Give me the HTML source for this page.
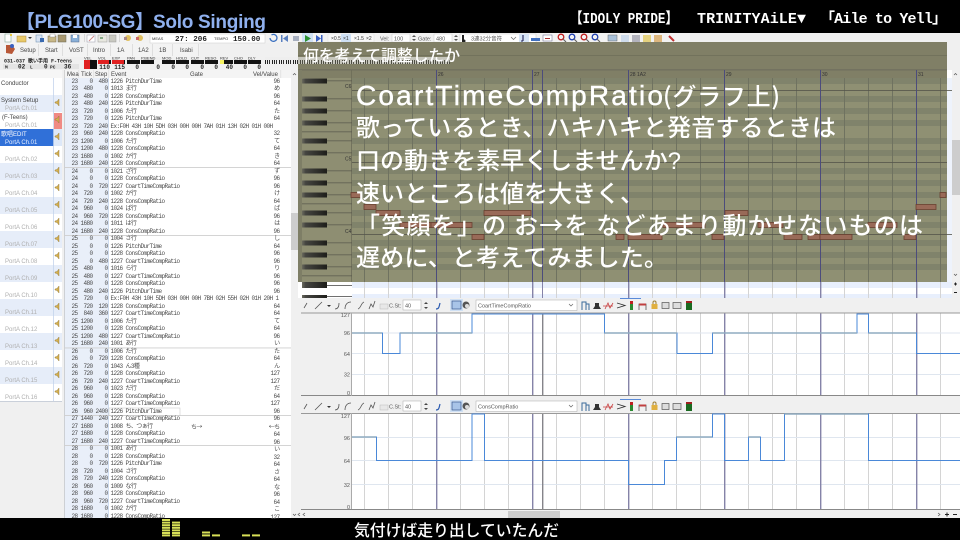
<!DOCTYPE html>
<html><head><meta charset="utf-8"><style>
html,body{margin:0;padding:0;background:#000}
body{position:relative;width:960px;height:540px;overflow:hidden}
svg{position:absolute;left:0;top:0}
pre{position:absolute;margin:0;font:6px/7.5px "Liberation Mono","Noto Sans CJK JP",monospace;letter-spacing:-.6px;color:#4a4a4a}
.s text{font-family:"Liberation Sans","Noto Sans CJK JP",sans-serif;font-size:6px;fill:#444}
.s text.g{fill:#b0b0b0}
.s text.m{font-family:"Liberation Mono",monospace;font-size:6px;font-weight:bold;fill:#222}
.s text.big{font-family:"Liberation Mono",monospace;font-size:7.6px;font-weight:bold;fill:#222}
.s text.y{font-size:5.5px;fill:#555}
.s text.r{font-size:5px;fill:#333}
.s text.main{font-family:"Liberation Sans","Noto Sans CJK JP",sans-serif;font-size:24px;font-weight:500;fill:#fff}
.s text.lyr{font-family:"Liberation Sans","Noto Sans CJK JP",sans-serif;font-size:15.8px;font-weight:500;fill:#fff}
.s text.tt{font-family:"Liberation Sans","Noto Sans CJK JP",sans-serif;font-size:19px;font-weight:bold;fill:#8fb0ee}
.s text.tr{font-family:"Liberation Mono","Noto Sans CJK JP",monospace;font-size:15px;font-weight:bold;fill:#fff}
</style></head><body>
<svg class="s" width="960" height="540" viewBox="0 0 960 540">
<defs>
<pattern id="b" x="364" y="0" width="24" height="10" patternUnits="userSpaceOnUse"><rect width="1" height="10" fill="#d4d4d4"/></pattern>
<pattern id="bo" x="364" y="0" width="24" height="10" patternUnits="userSpaceOnUse"><rect width="1" height="10" fill="#6f7260"/></pattern>
<pattern id="m" x="436" y="0" width="96" height="10" patternUnits="userSpaceOnUse"><rect width="1.4" height="10" fill="#8583a8"/></pattern>
<pattern id="mo" x="436" y="0" width="96" height="10" patternUnits="userSpaceOnUse"><rect width="1" height="10" fill="#4c4c7c"/></pattern>
<pattern id="kb" x="265" y="0" width="7" height="10" patternUnits="userSpaceOnUse"><rect width="7" height="10" fill="#eee"/><rect width="1" height="6" fill="#222"/><rect x="2" width="1" height="6" fill="#222"/><rect x="4" width="1" height="6" fill="#333"/></pattern>
<linearGradient id="k" x1="0" x2="1"><stop offset="0" stop-color="#6a6a5e"/><stop offset=".15" stop-color="#444440"/><stop offset="1" stop-color="#1e1e1a"/></linearGradient>
</defs>
<!-- app base -->
<rect y="33" width="960" height="485" fill="#f0f0f0"/>
<rect y="33" width="690" height="10" fill="#f2f2f2"/>
<rect y="43" width="200" height="14" fill="#f3f3f3"/>
<!-- toolbar 1 icons -->
<g stroke="none">
<rect x="5" y="34" width="6" height="8" fill="#fff" stroke="#8a9" stroke-width=".6"/><rect x="10" y="34" width="2" height="2" fill="#e8c840"/>
<rect x="17" y="36" width="9" height="6" fill="#e8c868" stroke="#a8883a" stroke-width=".5"/>
<path d="M28 37h4l-2 2z" fill="#333"/>
<rect x="36" y="35" width="6" height="7" fill="#d8e4f4" stroke="#6688aa" stroke-width=".5"/><rect x="40" y="38" width="4" height="4" fill="#3a6ab0"/>
<rect x="48" y="36" width="8" height="6" fill="#c8b888" stroke="#7a6a4a" stroke-width=".5"/><rect x="50" y="34" width="5" height="3" fill="#fff" stroke="#888" stroke-width=".4"/>
<rect x="58" y="35" width="8" height="7" fill="#a89870" stroke="#665" stroke-width=".5"/>
<rect x="71" y="35" width="8" height="7" fill="#8ab0d8" stroke="#568" stroke-width=".5"/><rect x="73" y="35" width="4" height="3" fill="#fff"/>
<rect x="84" y="34" width=".7" height="8" fill="#ccc"/>
<rect x="87" y="35" width="8" height="7" fill="#fff" stroke="#99a" stroke-width=".5"/><path d="M89 41l5-5" stroke="#c88" stroke-width="1"/>
<rect x="98" y="35" width="9" height="7" fill="#e8e8e0" stroke="#999" stroke-width=".5"/><rect x="100" y="37" width="3" height="2" fill="#8a8"/>
<rect x="109" y="35" width="7" height="7" fill="#c8c8c0" stroke="#999" stroke-width=".5"/>
<rect x="119" y="34" width=".7" height="8" fill="#ccc"/>
<circle cx="128" cy="38" r="3" fill="#e0c060"/><rect x="124" y="37" width="3" height="3" fill="#a88"/>
<circle cx="140" cy="38" r="3" fill="#e0c060"/><rect x="136" y="37" width="3" height="3" fill="#c66"/>
<rect x="150" y="34" width="115" height="9" fill="#fff" stroke="#ccc" stroke-width=".5"/>
<path d="M270 38a3.500 3.500 0 1 0 1.500-3" fill="none" stroke="#3a70c0" stroke-width="1.300"/>
<rect x="281" y="35" width="1.500" height="7" fill="#5a80c0"/><path d="M288 35v7l-5-3.500z" fill="#5a80c0"/>
<rect x="293" y="36" width="6" height="5" fill="#a8b0c0"/>
<rect x="302" y="33" width="11" height="10" fill="#cfe0f4"/><path d="M305 35v7l6-3.500z" fill="#2a9030"/>
<path d="M316 35v7l5-3.500z" fill="#3a60c0"/><rect x="321" y="35" width="1.500" height="7" fill="#3a60c0"/>
<rect x="328" y="34" width="46" height="8" fill="#f8f8f8" stroke="#ddd" stroke-width=".5"/><rect x="341" y="34" width="10" height="8" fill="#cfe0f4"/>
<rect x="392" y="34" width="18" height="8" fill="#fff" stroke="#ccc" stroke-width=".5"/>
<rect x="434" y="34" width="18" height="8" fill="#fff" stroke="#ccc" stroke-width=".5"/>
<path d="M412 37l2-2 2 2zM412 39l2 2 2-2zM454 37l2-2 2 2zM454 39l2 2 2-2z" fill="#555"/>
<rect x="460" y="34" width="76" height="9" fill="#fff" stroke="#ccc" stroke-width=".5"/>
<rect x="462" y="35" width="2" height="7" fill="#222"/><circle cx="464" cy="41" r="1.500" fill="#222"/>
<path d="M511 37l2.500 2.500 2.500-2.500" fill="none" stroke="#666" stroke-width=".7"/>
<rect x="519" y="34" width="10" height="9" fill="#d6e4f6"/><path d="M523 35v6M523 41h-2" stroke="#225" stroke-width="1.100"/>
<rect x="531" y="38" width="9" height="3" fill="#4070c0"/><rect x="543" y="35" width="9" height="6" fill="#fff" stroke="#668" stroke-width=".5"/><rect x="545" y="38" width="5" height="1" fill="#a33"/>
<g fill="none" stroke-width="1.300"><circle cx="561" cy="37" r="2.800" stroke="#c02020"/><circle cx="572" cy="37" r="2.800" stroke="#2040b0"/><circle cx="584" cy="37" r="2.800" stroke="#c02020"/><circle cx="595" cy="37" r="2.800" stroke="#2040b0"/></g>
<path d="M563 39l3 3M574 39l3 3M586 39l3 3M597 39l3 3" stroke="#666" stroke-width="1.200"/>
<rect x="608" y="35" width="9" height="6" fill="#a8c0d8" stroke="#666" stroke-width=".5"/>
<rect x="621" y="35" width="8" height="7" fill="#cfdcec"/><rect x="632" y="35" width="8" height="7" fill="#889" opacity=".6"/>
<rect x="643" y="35" width="8" height="7" fill="#e0c860" opacity=".8"/><rect x="654" y="35" width="8" height="7" fill="#d8a860" opacity=".8"/>
<path d="M669 36l5 5" stroke="#c03030" stroke-width="2"/>
</g>
<text class="r" x="152" y="40" style="font-size:4px">MEAS</text><text class="big" x="175" y="41">27: 206</text>
<text class="r" x="214" y="40" style="font-size:4px">TEMPO</text><text class="big" x="233" y="41">150.00</text>
<text class="r" x="331" y="40">×0.5</text><text class="r" x="343" y="40">×1</text><text class="r" x="354" y="40">×1.5</text><text class="r" x="366" y="40">×2</text>
<text class="y" x="380" y="40.500">Vel:</text><text class="y" x="394" y="40.500">100</text>
<text class="y" x="418" y="40.500">Gate:</text><text class="y" x="436" y="40.500">480</text>
<text class="y" x="471" y="40.500">3連32分音符</text>
<!-- toolbar 2 -->
<path d="M6 45h6l3 4-3 5-6-1z" fill="#b85838"/><circle cx="12" cy="46" r="2" fill="#3a60c0"/>
<g fill="#d4d4d4"><rect x="38" y="44" width=".7" height="12"/><rect x="62" y="44" width=".7" height="12"/><rect x="87" y="44" width=".7" height="12"/><rect x="110" y="44" width=".7" height="12"/><rect x="132" y="44" width=".7" height="12"/><rect x="152" y="44" width=".7" height="12"/><rect x="172" y="44" width=".7" height="12"/><rect x="198" y="44" width=".7" height="12"/></g>
<g><text x="20" y="52">Setup</text><text x="45" y="52">Start</text><text x="69" y="52">VoST</text><text x="93" y="52">Intro</text><text x="117" y="52">1A</text><text x="138" y="52">1A2</text><text x="159" y="52">1B</text><text x="180" y="52">Isabi</text></g>
<!-- mixer -->
<rect y="57" width="295" height="13" fill="#f0f0f0"/>
<text class="m" x="4" y="62.500" style="font-size:5px">031-037 歌い手用 F-Teens</text>
<rect x="3" y="64" width="76" height="5" fill="#e4e4e4"/>
<text class="m" x="5" y="68.500" style="font-size:4.500px">M</text><text class="m" x="18" y="68.500">02</text><text class="m" x="30" y="68.500" style="font-size:4.500px">L</text><text class="m" x="44" y="68.500">0</text><text class="m" x="50" y="68.500" style="font-size:4.500px">PC</text><text class="m" x="64" y="68.500">36</text>
<g fill="#111"><rect x="84" y="60" width="13" height="9"/><rect x="98" y="60" width="13" height="4"/><rect x="112" y="60" width="13" height="4"/><rect x="127" y="60" width="13" height="4"/><rect x="141" y="60" width="13" height="4"/><rect x="162" y="60" width="13" height="4"/><rect x="176" y="60" width="13" height="4"/><rect x="191" y="60" width="13" height="4"/><rect x="205" y="60" width="13" height="4"/><rect x="220" y="60" width="13" height="4"/><rect x="234" y="60" width="13" height="4"/><rect x="248" y="60" width="13" height="4"/></g>
<rect x="84" y="60" width="6" height="9" fill="#e02020"/><rect x="98" y="60" width="11" height="4" fill="#e02020"/><rect x="112" y="60" width="12" height="4" fill="#e02020"/><rect x="220" y="60" width="4" height="4" fill="#f4f060"/>
<g><text x="84" y="59.500" class="r" style="font-size:4px">VEL</text><text x="98" y="59.500" class="r" style="font-size:4px">VOL</text><text x="112" y="59.500" class="r" style="font-size:4px">EXP</text><text x="127" y="59.500" class="r" style="font-size:4px">PAN</text><text x="141" y="59.500" class="r" style="font-size:4px">P.BEND</text><text x="162" y="59.500" class="r" style="font-size:4px">MOD</text><text x="176" y="59.500" class="r" style="font-size:4px">HOLD</text><text x="191" y="59.500" class="r" style="font-size:4px">CUT</text><text x="205" y="59.500" class="r" style="font-size:4px">RESO</text><text x="220" y="59.500" class="r" style="font-size:4px">REV</text><text x="234" y="59.500" class="r" style="font-size:4px">CHO</text><text x="248" y="59.500" class="r" style="font-size:4px">DLY</text></g>
<g text-anchor="end"><text class="m" x="110" y="69">110</text><text class="m" x="125" y="69">115</text><text class="m" x="139" y="69">0</text><text class="m" x="160" y="69">0</text><text class="m" x="175" y="69">0</text><text class="m" x="189" y="69">0</text><text class="m" x="204" y="69">0</text><text class="m" x="218" y="69">0</text><text class="m" x="233" y="69">40</text><text class="m" x="247" y="69">0</text><text class="m" x="261" y="69">0</text></g>
<rect x="265" y="57" width="185" height="7" fill="url(#kb)"/>
<!-- track panel -->
<rect y="70" width="62" height="448" fill="#f0f0f0"/>
<rect y="70" width="62" height="8" fill="#f6f6f6"/>
<rect y="78" width="62" height="17" fill="#fff"/>
<rect y="95" width="62" height="17" fill="#e6edf9"/>
<rect y="112" width="62" height="17" fill="#fff"/>
<rect y="129" width="54" height="17" fill="#3070d8"/><rect x="54" y="129" width="8" height="17" fill="#dde8f8"/>
<g fill="#e6edf9"><rect y="163" width="62" height="17"/><rect y="197" width="62" height="17"/><rect y="231" width="62" height="17"/><rect y="265" width="62" height="17"/><rect y="299" width="62" height="17"/><rect y="333" width="62" height="17"/><rect y="367" width="62" height="17"/></g>
<g fill="#fff"><rect y="146" width="62" height="17"/><rect y="180" width="62" height="17"/><rect y="214" width="62" height="17"/><rect y="248" width="62" height="17"/><rect y="282" width="62" height="17"/><rect y="316" width="62" height="17"/><rect y="350" width="62" height="17"/><rect y="384" width="62" height="17"/></g>
<rect x="54" y="113" width="8" height="16" fill="#f08a84"/>
<rect x="53" y="78" width=".8" height="323" fill="#c4d4ec"/>
<rect y="401" width="62" height=".8" fill="#c0c8d4"/>
<g fill="#d4b050" stroke="#8a7030" stroke-width=".4"><path d="M55 102l2-.5 2-2.500v7l-2-2.500-2-.5z"/><path d="M55 119l2-.5 2-2.500v7l-2-2.500-2-.5z"/><path d="M55 136l2-.5 2-2.500v7l-2-2.500-2-.5z"/><path d="M55 153l2-.5 2-2.500v7l-2-2.500-2-.5z"/><path d="M55 170l2-.5 2-2.500v7l-2-2.500-2-.5z"/><path d="M55 187l2-.5 2-2.500v7l-2-2.500-2-.5z"/><path d="M55 204l2-.5 2-2.500v7l-2-2.500-2-.5z"/><path d="M55 221l2-.5 2-2.500v7l-2-2.500-2-.5z"/><path d="M55 238l2-.5 2-2.500v7l-2-2.500-2-.5z"/><path d="M55 255l2-.5 2-2.500v7l-2-2.500-2-.5z"/><path d="M55 272l2-.5 2-2.500v7l-2-2.500-2-.5z"/><path d="M55 289l2-.5 2-2.500v7l-2-2.500-2-.5z"/><path d="M55 306l2-.5 2-2.500v7l-2-2.500-2-.5z"/><path d="M55 323l2-.5 2-2.500v7l-2-2.500-2-.5z"/><path d="M55 340l2-.5 2-2.500v7l-2-2.500-2-.5z"/><path d="M55 357l2-.5 2-2.500v7l-2-2.500-2-.5z"/><path d="M55 374l2-.5 2-2.500v7l-2-2.500-2-.5z"/><path d="M55 391l2-.5 2-2.500v7l-2-2.500-2-.5z"/></g>
<text x="1" y="85">Conductor</text><text x="1" y="102">System Setup</text><text class="g" x="5" y="110">PortA  Ch.01</text>
<text x="2" y="119">(F-Teens)</text><text class="g" x="5" y="127">PortA  Ch.01</text>
<text x="1" y="136" style="fill:#fff">歌唱EDIT</text><text x="5" y="144" style="fill:#e8f0ff">PortA  Ch.01</text>
<text class="g" x="5" y="161">PortA  Ch.02</text><text class="g" x="5" y="178">PortA  Ch.03</text><text class="g" x="5" y="195">PortA  Ch.04</text><text class="g" x="5" y="212">PortA  Ch.05</text><text class="g" x="5" y="229">PortA  Ch.06</text><text class="g" x="5" y="246">PortA  Ch.07</text><text class="g" x="5" y="263">PortA  Ch.08</text><text class="g" x="5" y="280">PortA  Ch.09</text><text class="g" x="5" y="297">PortA  Ch.10</text><text class="g" x="5" y="314">PortA  Ch.11</text><text class="g" x="5" y="331">PortA  Ch.12</text><text class="g" x="5" y="348">PortA  Ch.13</text><text class="g" x="5" y="365">PortA  Ch.14</text><text class="g" x="5" y="382">PortA  Ch.15</text><text class="g" x="5" y="399">PortA  Ch.16</text>
<!-- event list -->
<rect x="64" y="70" width="227" height="448" fill="#fff"/>
<rect x="64" y="70" width="45" height="448" fill="#e9eff9"/>
<rect x="108" y="78" width=".8" height="440" fill="#c8d8ee"/>
<rect x="64" y="70" width="227" height="8" fill="#f4f4f4"/>
<rect x="64" y="70" width=".6" height="448" fill="#bbb"/>
<g fill="#d8d8d8"><rect x="78.500" y="70" width=".6" height="8"/><rect x="93.500" y="70" width=".6" height="8"/><rect x="108.500" y="70" width=".6" height="8"/><rect x="280.500" y="70" width=".6" height="8"/></g>
<text x="67" y="76">Mea</text><text x="81" y="76">Tick</text><text x="95" y="76">Step</text><text x="111" y="76">Event</text><text x="190" y="76">Gate</text><text x="253" y="76">Vel/Value</text>
<g fill="#cfcfcf"><rect x="64" y="167" width="227" height=".9"/><rect x="64" y="235" width="227" height=".9"/><rect x="64" y="347.500" width="227" height=".9"/><rect x="64" y="415" width="227" height=".9"/><rect x="64" y="445" width="227" height=".9"/></g>
<rect x="109" y="408" width="71" height="7.500" fill="none" stroke="#ccc" stroke-width=".6"/>
<rect x="291" y="70" width="7" height="448" fill="#f0f0f0"/><rect x="291" y="213" width="7" height="37" fill="#cdcdcd"/>
<path d="M293 75l1.500-1.500 1.500 1.500M293 514l1.500 1.500 1.500-1.500" fill="none" stroke="#555" stroke-width=".7"/>
<!-- piano roll below overlay -->
<rect x="298" y="70" width="654" height="228" fill="#fff"/>
<rect x="352" y="282" width="600" height="6" fill="#e8effc"/>
<rect x="352" y="294" width="600" height="4" fill="#e8effc"/>
<rect x="352" y="282" width="600" height="16" fill="url(#b)"/>
<rect x="352" y="282" width="600" height="16" fill="url(#m)"/><rect x="542" y="282" width="1" height="16" fill="#8583a8"/>
<rect x="302" y="282" width="25" height="6" fill="url(#k)"/><rect x="327" y="285" width="25" height=".7" fill="#333"/>
<rect x="302" y="295" width="25" height="3" fill="url(#k)"/><rect x="327" y="296" width="25" height=".7" fill="#333"/>
<rect x="352" y="78" width="600" height="204" fill="#eef3fc"/>
<rect x="947" y="78" width="5" height="204" fill="url(#b)"/>
<!-- right scrollbar -->
<rect x="952" y="70" width="8" height="228" fill="#f0f0f0"/><rect x="952" y="140" width="8" height="55" fill="#cdcdcd"/>
<path d="M954 75l1.500-1.500 1.500 1.500M954 274l1.500 1.500 1.500-1.500" fill="none" stroke="#555" stroke-width=".7"/>
<rect x="954" y="283.500" width="3" height="1" fill="#222"/><rect x="955" y="282.500" width="1" height="3" fill="#222"/><rect x="954" y="292" width="3" height="1" fill="#222"/>
<!-- olive overlay -->
<rect x="298" y="42" width="649" height="240" fill="#807f66"/>
<rect x="298" y="57" width="152" height="7" fill="#8b8a72"/>
<rect x="298" y="57" width="152" height="7" fill="url(#kb)" opacity=".6"/>
<rect x="298" y="55" width="649" height=".7" fill="#6c6c58"/>
<rect x="298" y="69.500" width="649" height=".8" fill="#66665a"/>
<rect x="352" y="78" width="595" height="204" fill="#8f9073"/>
<g fill="#80836b"><rect x="352" y="78" width="595" height="6"/><rect x="352" y="96" width="595" height="6"/><rect x="352" y="108" width="595" height="6"/><rect x="352" y="120" width="595" height="6"/><rect x="352" y="138" width="595" height="6"/><rect x="352" y="150" width="595" height="6"/><rect x="352" y="168" width="595" height="6"/><rect x="352" y="180" width="595" height="6"/><rect x="352" y="192" width="595" height="6"/><rect x="352" y="210" width="595" height="6"/><rect x="352" y="222" width="595" height="6"/><rect x="352" y="240" width="595" height="6"/><rect x="352" y="252" width="595" height="6"/><rect x="352" y="264" width="595" height="6"/></g>
<rect x="352" y="78" width="595" height="204" fill="url(#bo)"/>
<rect x="302" y="78" width="50" height="204" fill="#8e8e72"/>
<rect x="298" y="70" width="4" height="212" fill="#7e7e66"/>
<rect x="351" y="70" width=".8" height="212" fill="#6c6c58"/>
<g fill="#55554a"><rect x="327" y="80.500" width="25" height=".7"/><rect x="327" y="98.500" width="25" height=".7"/><rect x="327" y="110.500" width="25" height=".7"/><rect x="327" y="122.500" width="25" height=".7"/><rect x="327" y="140.500" width="25" height=".7"/><rect x="327" y="152.500" width="25" height=".7"/><rect x="327" y="170.500" width="25" height=".7"/><rect x="327" y="182.500" width="25" height=".7"/><rect x="327" y="194.500" width="25" height=".7"/><rect x="327" y="212.500" width="25" height=".7"/><rect x="327" y="224.500" width="25" height=".7"/><rect x="327" y="242.500" width="25" height=".7"/><rect x="327" y="254.500" width="25" height=".7"/><rect x="327" y="266.500" width="25" height=".7"/><rect x="302" y="275.500" width="50" height=".7"/><rect x="302" y="203.500" width="50" height=".7"/><rect x="302" y="131.500" width="50" height=".7"/></g>
<g fill="url(#k)"><rect x="302" y="78.500" width="25" height="5"/><rect x="302" y="96.500" width="25" height="5"/><rect x="302" y="108.500" width="25" height="5"/><rect x="302" y="120.500" width="25" height="5"/><rect x="302" y="138.500" width="25" height="5"/><rect x="302" y="150.500" width="25" height="5"/><rect x="302" y="168.500" width="25" height="5"/><rect x="302" y="180.500" width="25" height="5"/><rect x="302" y="192.500" width="25" height="5"/><rect x="302" y="210.500" width="25" height="5"/><rect x="302" y="222.500" width="25" height="5"/><rect x="302" y="240.500" width="25" height="5"/><rect x="302" y="252.500" width="25" height="5"/><rect x="302" y="264.500" width="25" height="5"/></g>
<rect x="352" y="90" width="600" height=".8" fill="#55554a"/><rect x="352" y="162" width="595" height=".8" fill="#55554a"/><rect x="352" y="234" width="600" height=".8" fill="#55554a"/>
<rect x="352" y="70" width="595" height="212" fill="url(#mo)"/><rect x="542" y="70" width="1" height="212" fill="#4c4c7c"/>
<g><text class="r" x="345" y="88">C6</text><text class="r" x="345" y="160.500">C5</text><text class="r" x="345" y="233">C4</text></g>
<g><text class="r" x="438" y="76">26</text><text class="r" x="534" y="76">27</text><text class="r" x="630" y="76">28 1A2</text><text class="r" x="726" y="76">29</text><text class="r" x="822" y="76">30</text><text class="r" x="918" y="76">31</text></g>
<!-- notes -->
<g fill="#996a58" stroke="#6a4030" stroke-width=".8">
<rect x="351" y="192.500" width="10" height="5"/><rect x="364" y="204.500" width="12" height="5"/><rect x="376" y="210.500" width="24" height="5"/><rect x="400" y="222.500" width="31" height="5"/><rect x="431" y="222.500" width="41" height="5"/><rect x="472" y="234.500" width="12" height="5"/><rect x="484" y="210.500" width="47" height="5"/>
<rect x="616" y="234.500" width="8" height="5"/><rect x="628" y="234.500" width="34" height="5"/><rect x="663" y="222.500" width="42" height="5"/><rect x="712" y="234.500" width="12" height="5"/><rect x="725" y="210.500" width="23" height="5"/><rect x="758" y="222.500" width="25" height="5"/><rect x="784" y="234.500" width="18" height="5"/><rect x="808" y="234.500" width="12" height="5"/><rect x="820" y="234.500" width="32" height="5"/><rect x="868" y="222.500" width="29" height="5"/><rect x="904" y="234.500" width="12" height="5"/><rect x="916" y="204.500" width="20" height="5"/><rect x="940" y="192.500" width="6" height="5"/>
</g>
<!-- graph toolbars + graphs -->
<rect x="298" y="298" width="662" height="220" fill="#f0f0f0"/>
<rect x="620" y="298" width="21" height="1" fill="#5a8ad8"/><rect x="620" y="399" width="21" height="1" fill="#5a8ad8"/>
<g fill="none" stroke="#555" stroke-width=".8">
<path d="M304 308l3-5M315 309l7-7M335 309c3 0 4-2 4-6M345 309c0-4 2-7 6-7M358 309c3-1 3-6 6-7M369 309l2-5 2 3 2-6"/>
<path d="M304 409l3-5M315 410l7-7M335 410c3 0 4-2 4-6M345 410c0-4 2-7 6-7M358 410c3-1 3-6 6-7M369 410l2-5 2 3 2-6"/>
</g>
<path d="M327 305h4l-2 2zM327 406h4l-2 2z" fill="#333"/>
<rect x="380" y="304" width="8" height="5" fill="#e8e8e8" stroke="#bbb" stroke-width=".5"/><rect x="380" y="405" width="8" height="5" fill="#e8e8e8" stroke="#bbb" stroke-width=".5"/>
<rect x="403" y="300" width="18" height="10" fill="#fff" stroke="#aaa" stroke-width=".5"/><rect x="403" y="401" width="18" height="10" fill="#fff" stroke="#aaa" stroke-width=".5"/>
<path d="M424 304l2-2 2 2zM424 307l2 2 2-2zM424 405l2-2 2 2zM424 408l2 2 2-2z" fill="#444"/>
<text class="y" x="389" y="307.500">C.St:</text><text class="y" x="405" y="307.500">40</text><text class="y" x="389" y="408.500">C.St:</text><text class="y" x="405" y="408.500">40</text>
<path d="M436 309c3 0 3-2 4-6M436 410c3 0 3-2 4-6" stroke="#2a5ab0" stroke-width="1.200" fill="none"/>
<rect x="450" y="299" width="13" height="12" fill="#cfe0f4"/><rect x="452" y="301" width="9" height="8" fill="#a8c4e8" stroke="#3a5a90" stroke-width=".7"/>
<rect x="450" y="400" width="13" height="12" fill="#cfe0f4"/><rect x="452" y="402" width="9" height="8" fill="#a8c4e8" stroke="#3a5a90" stroke-width=".7"/>
<circle cx="466" cy="305" r="3.500" fill="#555"/><circle cx="467" cy="306" r="2" fill="#ddd"/><circle cx="466" cy="406" r="3.500" fill="#555"/><circle cx="467" cy="407" r="2" fill="#ddd"/>
<rect x="476" y="300" width="101" height="10.500" fill="#fff" stroke="#aaa" stroke-width=".5"/><rect x="476" y="401" width="101" height="10.500" fill="#fff" stroke="#aaa" stroke-width=".5"/>
<text class="y" x="478" y="307.500">CoartTimeCompRatio</text><text class="y" x="478" y="408.500">ConsCompRatio</text>
<path d="M569 304l2 2 2-2M569 405l2 2 2-2" fill="none" stroke="#666" stroke-width=".7"/>
<g>
<path d="M582 310v-8h4v8M586 304h3v6M582 411v-8h4v8M586 405h3v6" fill="none" stroke="#3a6a9a" stroke-width="1"/>
<path d="M593 309h8l-2-3v-3h-4v3zM593 410h8l-2-3v-3h-4v3z" fill="#333"/>
<path d="M605 309l3-6 2 5 3-5M603 306h10M605 410l3-6 2 5 3-5M603 407h10" fill="none" stroke="#c84040" stroke-width=".8"/>
<path d="M617 303l8 2.500-8 2.500M617 404l8 2.500-8 2.500" fill="none" stroke="#333" stroke-width=".9"/>
<rect x="630" y="301" width="3" height="9" fill="#2a8a30"/><rect x="630" y="301" width="3" height="3" fill="#c02020"/><rect x="630" y="402" width="3" height="9" fill="#2a8a30"/><rect x="630" y="402" width="3" height="3" fill="#c02020"/>
<path d="M639 310v-6h7v6M639 304h7M639 411v-6h7v6M639 405h7" fill="none" stroke="#555" stroke-width=".8"/><rect x="639" y="303.500" width="7" height="2" fill="#c04040"/><rect x="639" y="404.500" width="7" height="2" fill="#c04040"/>
<rect x="651.500" y="304" width="6" height="5" fill="#e0b040"/><rect x="651.500" y="405" width="6" height="5" fill="#e0b040"/><path d="M653 304v-1.500a1.500 1.500 0 0 1 3 0v1.500M653 405v-1.500a1.500 1.500 0 0 1 3 0v1.500" fill="none" stroke="#a08030"/>
<rect x="662" y="302.500" width="7" height="6" fill="#ddd" stroke="#555" stroke-width=".7"/><rect x="673" y="302.500" width="8" height="6" fill="#ddd" stroke="#555" stroke-width=".7"/><rect x="662" y="403.500" width="7" height="6" fill="#ddd" stroke="#555" stroke-width=".7"/><rect x="673" y="403.500" width="8" height="6" fill="#ddd" stroke="#555" stroke-width=".7"/>
<rect x="686" y="301" width="6" height="9" fill="#1a6a20"/><rect x="686" y="301" width="6" height="2" fill="#a02020"/><rect x="686" y="402" width="6" height="9" fill="#1a6a20"/><rect x="686" y="402" width="6" height="2" fill="#a02020"/>
</g>
<!-- graph 1 -->
<rect x="352" y="313" width="608" height="82" fill="#fff"/>
<rect x="352" y="313" width="608" height="82" fill="url(#b)"/>
<g fill="#dfe6ef"><rect x="352" y="332.500" width="608" height="1"/><rect x="352" y="353" width="608" height="1"/><rect x="352" y="374" width="608" height="1"/></g>
<rect x="352" y="313" width="608" height="82" fill="url(#m)"/><rect x="542" y="313" width="1.400" height="82" fill="#85848a"/>
<rect x="301" y="312.500" width="659" height="1" fill="#999"/><rect x="301" y="395" width="659" height="1" fill="#888"/><rect x="351" y="313" width="1" height="83" fill="#aaa"/>
<path d="M352 333H382.500V353.500H400V333H472V314H604.500V333H677V353.500H712.500V333H857V314H868.500V333H916.500V353.500H960" fill="none" stroke="#4a88d8" stroke-width="1"/>
<path d="M352 333H382M400 333H472M604.500 333H677M712.500 333H857M868.500 333H916" fill="none" stroke="#8fabc0" stroke-width="1.500"/>
<g text-anchor="end"><text class="y" x="350" y="317">127</text><text class="y" x="350" y="335">96</text><text class="y" x="350" y="356">64</text><text class="y" x="350" y="376.500">32</text><text class="y" x="350" y="395">0</text></g>
<!-- graph 2 -->
<rect x="352" y="413" width="608" height="96" fill="#fff"/>
<rect x="352" y="413" width="608" height="96" fill="url(#b)"/>
<g fill="#dfe6ef"><rect x="352" y="437" width="608" height="1"/><rect x="352" y="460" width="608" height="1"/><rect x="352" y="484" width="608" height="1"/></g>
<rect x="352" y="413" width="608" height="96" fill="url(#m)"/><rect x="542" y="413" width="1.400" height="96" fill="#85848a"/>
<rect x="301" y="413" width="659" height="1" fill="#999"/><rect x="301" y="509" width="659" height="1" fill="#888"/><rect x="351" y="413" width="1" height="96" fill="#aaa"/>
<path d="M352 437H376.500V460.500H472V414H484.500V460.500H628.500V484.500H664.500V460.500H676.500V437H712.500V414H724.500V460.500H748.500V437H760.500V460.500H784.500V414H868.500V460.500H960" fill="none" stroke="#4a88d8" stroke-width="1"/>
<path d="M352 437H376M676.500 437H712M748.500 437H760M784.500 414H868" fill="none" stroke="#8fabc0" stroke-width="1.500"/>
<g text-anchor="end"><text class="y" x="350" y="418">127</text><text class="y" x="350" y="440">96</text><text class="y" x="350" y="463">64</text><text class="y" x="350" y="487">32</text><text class="y" x="350" y="509">0</text></g>
<rect x="508" y="511" width="52" height="7" fill="#cdcdcd"/>
<path d="M300 513l-2 1.500 2 1.500M305 513l-2 1.500 2 1.500M938 513l2 1.500-2 1.500" fill="none" stroke="#555" stroke-width=".7"/><rect x="945" y="514" width="4" height="1" fill="#222"/><rect x="946.500" y="512.500" width="1" height="4" fill="#222"/><rect x="953" y="514" width="4" height="1" fill="#222"/>
<!-- black bands -->
<rect y="0" width="960" height="33" fill="#000"/>
<rect y="518" width="960" height="22" fill="#000"/>
<g fill="#d8e058"><rect x="162" y="519" width="8" height="2"/><rect x="162" y="521.600" width="8" height="2"/><rect x="162" y="524.200" width="8" height="2"/><rect x="162" y="526.800" width="8" height="2"/><rect x="162" y="529.400" width="8" height="2"/><rect x="162" y="532" width="8" height="2"/><rect x="162" y="534.400" width="8" height="2"/>
<rect x="172" y="521.600" width="8" height="2"/><rect x="172" y="524.200" width="8" height="2"/><rect x="172" y="526.800" width="8" height="2"/><rect x="172" y="529.400" width="8" height="2"/><rect x="172" y="532" width="8" height="2"/><rect x="172" y="534.400" width="8" height="2"/>
<rect x="202" y="531.500" width="8" height="2"/><rect x="202" y="534.400" width="8" height="2"/><rect x="212" y="534.400" width="8" height="2"/><rect x="242" y="534.400" width="8" height="2"/><rect x="252" y="534.400" width="8" height="2"/></g>
<!-- big text -->
<text class="tt" x="16" y="28" textLength="138">【PLG100-SG】</text>
<text class="tt" x="153" y="28" textLength="113">Solo Singing</text>
<text class="tr" x="570" y="23" textLength="108" lengthAdjust="spacingAndGlyphs">【IDOLY PRIDE】</text>
<text class="tr" x="697" y="23" textLength="109">TRINITYAiLE▼</text>
<text class="tr" x="820" y="23" textLength="127">「Aile to Yell」</text>
<text class="lyr" x="303" y="61" textLength="157">何を考えて調整したか</text>
<text class="main" x="356" y="105" textLength="307" style="font-size:28px;stroke:#fff;stroke-width:.4px">CoartTimeCompRatio</text>
<text class="main" x="663" y="105" textLength="117" style="font-family:'Noto Sans CJK JP',sans-serif">(グラフ上)</text>
<text class="main" x="356" y="136" textLength="480">歌っているとき、ハキハキと発音するときは</text>
<text class="main" x="356" y="169" textLength="325">口の動きを素早くしませんか?</text>
<text class="main" x="356" y="202" textLength="288">速いところは値を大きく、</text>
<text class="main" x="356" y="234" textLength="567" style="font-family:'Noto Sans CJK JP',sans-serif">「笑顔を」の お→を などあまり動かせないものは</text>
<text class="main" x="356" y="266" textLength="312">遅めに、と考えてみました。</text>
<text class="lyr" x="354" y="536" textLength="205">気付けば走り出していたんだ</text>
</svg>
<pre style="left:65.500px;top:77.550px">  23    0  480 1226 PitchDurTime
  23  480    0 1013 ま行
  23  480    0 1228 ConsCompRatio
  23  480  240 1226 PitchDurTime
  23  720    0 1006 た行
  23  720    0 1226 PitchDurTime
  23  720  240 Ex:F0H 43H 10H 5DH 03H 00H 00H 7AH 01H 13H 02H 01H 00H
  23  960  240 1228 ConsCompRatio
  23 1200    0 1006 た行
  23 1200  480 1228 ConsCompRatio
  23 1680    0 1002 か行
  23 1680  240 1228 ConsCompRatio
  24    0    0 1021 ざ行
  24    0    0 1228 ConsCompRatio
  24    0  720 1227 CoartTimeCompRatio
  24  720    0 1002 か行
  24  720  240 1228 ConsCompRatio
  24  960    0 1024 ば行
  24  960  720 1228 ConsCompRatio
  24 1680    0 1011 は行
  24 1680  240 1228 ConsCompRatio
  25    0    0 1004 さ行
  25    0    0 1226 PitchDurTime
  25    0    0 1228 ConsCompRatio
  25    0  480 1227 CoartTimeCompRatio
  25  480    0 1016 ら行
  25  480    0 1227 CoartTimeCompRatio
  25  480    0 1228 ConsCompRatio
  25  480  240 1226 PitchDurTime
  25  720    0 Ex:F0H 43H 10H 5DH 03H 00H 00H 7BH 02H 55H 02H 01H 20H 1
  25  720  120 1228 ConsCompRatio
  25  840  360 1227 CoartTimeCompRatio
  25 1200    0 1006 た行
  25 1200    0 1228 ConsCompRatio
  25 1200  480 1227 CoartTimeCompRatio
  25 1680  240 1001 あ行
  26    0    0 1006 た行
  26    0  720 1228 ConsCompRatio
  26  720    0 1043 ん3種
  26  720    0 1228 ConsCompRatio
  26  720  240 1227 CoartTimeCompRatio
  26  960    0 1023 だ行
  26  960    0 1228 ConsCompRatio
  26  960    0 1227 CoartTimeCompRatio
  26  960 2400 1226 PitchDurTime
  27 1440  240 1227 CoartTimeCompRatio
  27 1680    0 1008 ち、つぁ行
  27 1680    0 1228 ConsCompRatio
  27 1680  240 1227 CoartTimeCompRatio
  28    0    0 1001 あ行
  28    0    0 1228 ConsCompRatio
  28    0  720 1226 PitchDurTime
  28  720    0 1004 さ行
  28  720  240 1228 ConsCompRatio
  28  960    0 1009 な行
  28  960    0 1228 ConsCompRatio
  28  960  720 1227 CoartTimeCompRatio
  28 1680    0 1002 か行
  28 1680    0 1228 ConsCompRatio</pre>
<pre style="left:240px;width:39.500px;top:77.550px;text-align:right">96
め
96
64
た
64

32
て
64
き
64
ず
96
96
け
64
ば
96
は
96
し
64
96
96
り
96
96
96

64
64
て
64
96
い
た
64
ん
127
127
だ
64
127
96
96
<span style="font-family:'Noto Sans CJK JP',sans-serif">←ち</span>
64
96
い
32
64
さ
64
な
96
64
こ
127</pre>
<pre style="left:191px;top:422.550px;font-family:'Noto Sans CJK JP',sans-serif">ち→</pre>
</body></html>
